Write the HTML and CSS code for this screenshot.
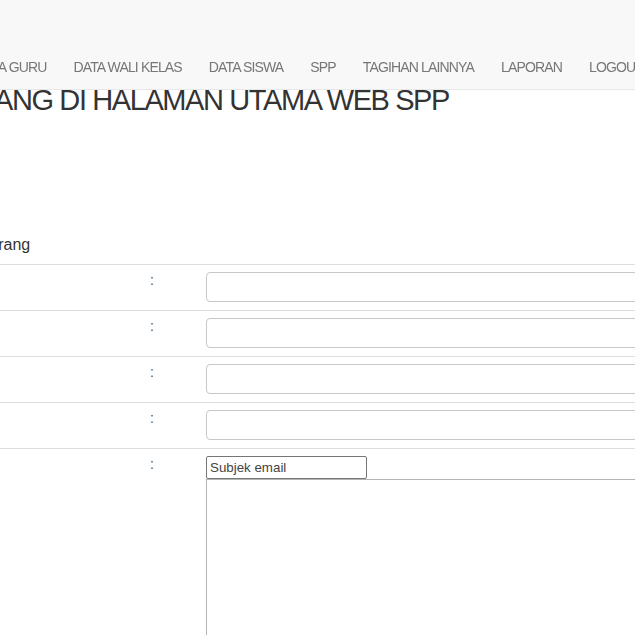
FILE: index.html
```html
<!DOCTYPE html>
<html lang="id">
<head>
<meta charset="utf-8">
<title>Web SPP</title>
<link rel="stylesheet" href="styles.css">
</head>
<body>
<nav class="navbar">
  <ul class="nav">
    <li><a href="#">DATA GURU</a></li>
    <li><a href="#">DATA WALI KELAS</a></li>
    <li><a href="#">DATA SISWA</a></li>
    <li><a href="#">SPP</a></li>
    <li><a href="#">TAGIHAN LAINNYA</a></li>
    <li><a href="#">LAPORAN</a></li>
    <li><a href="#">LOGOUT</a></li>
  </ul>
</nav>
<main class="content">
  <h1 class="title">SELAMAT DATANG DI HALAMAN UTAMA WEB SPP</h1>
  <p class="lead">Kirim email ke siswa sekarang</p>
  <table class="form-table">
    <tr>
      <td class="label">Nama</td>
      <td class="colon">:</td>
      <td class="field"><input class="text-input" type="text"></td>
    </tr>
    <tr>
      <td class="label">Kelas</td>
      <td class="colon">:</td>
      <td class="field"><input class="text-input" type="text"></td>
    </tr>
    <tr>
      <td class="label">Email</td>
      <td class="colon">:</td>
      <td class="field"><input class="text-input" type="text"></td>
    </tr>
    <tr>
      <td class="label">Tagihan</td>
      <td class="colon">:</td>
      <td class="field"><input class="text-input" type="text"></td>
    </tr>
    <tr>
      <td class="label">Pesan</td>
      <td class="colon">:</td>
      <td class="field">
        <input class="subject-input" type="text" placeholder="Subjek email">
        <textarea class="message"></textarea>
      </td>
    </tr>
  </table>
</main>
</body>
</html>
```
FILE: styles.css
```css
html, body {
  margin: 0;
  padding: 0;
  overflow: hidden;
  background: #fff;
}
body {
  font-family: "Liberation Sans", Arial, sans-serif;
  font-size: 14px;
  color: #333;
}
.navbar {
  position: fixed;
  top: 0;
  left: 0;
  right: 0;
  height: 89px;
  background: #f8f8f8;
  border-bottom: 1px solid #e7e7e7;
  z-index: 10;
}
.nav {
  list-style: none;
  margin: 0 0 0 -39px;
  padding: 57px 0 0;
  display: flex;
  white-space: nowrap;
}
.nav a {
  display: block;
  padding: 0 13.5px;
  line-height: 20px;
  color: #777;
  text-decoration: none;
  letter-spacing: -0.85px;
}
.content {
  margin-left: -185px;
  padding-top: 85px;
}
.title {
  margin: 0;
  font-size: 29px;
  font-weight: normal;
  line-height: 1.1;
  letter-spacing: -1.4px;
  white-space: nowrap;
  color: #333;
}
.lead {
  margin: 117px 0 7px;
  font-size: 16px;
  line-height: 22.86px;
  white-space: nowrap;
}
.form-table {
  border-collapse: collapse;
  width: 1300px;
}
.form-table td {
  border-top: 1px solid #ddd;
  padding: 7px 8px 8px;
  vertical-align: top;
  line-height: 20px;
}
.label {
  width: 311px;
}
.colon {
  width: 40px;
  padding-top: 5px !important;
  color: #555;
}
.text-input {
  display: block;
  box-sizing: border-box;
  width: 100%;
  height: 30px;
  border: 1px solid #c8c8c8;
  border-radius: 4px;
  margin: 0;
  background: #fff;
}
.subject-input {
  display: block;
  box-sizing: border-box;
  width: 161px;
  height: 23px;
  margin: 0;
  padding: 1px 3px;
  border: 1px solid #767676;
  border-radius: 2px;
  font-family: "Liberation Sans", Arial, sans-serif;
  font-size: 13.33px;
  color: #333;
}
.subject-input::placeholder {
  color: #444;
}
.message {
  display: block;
  box-sizing: border-box;
  width: 100%;
  height: 240px;
  margin: 0;
  border: 1px solid #b4b4b4;
  border-radius: 0;
  resize: none;
}
```
